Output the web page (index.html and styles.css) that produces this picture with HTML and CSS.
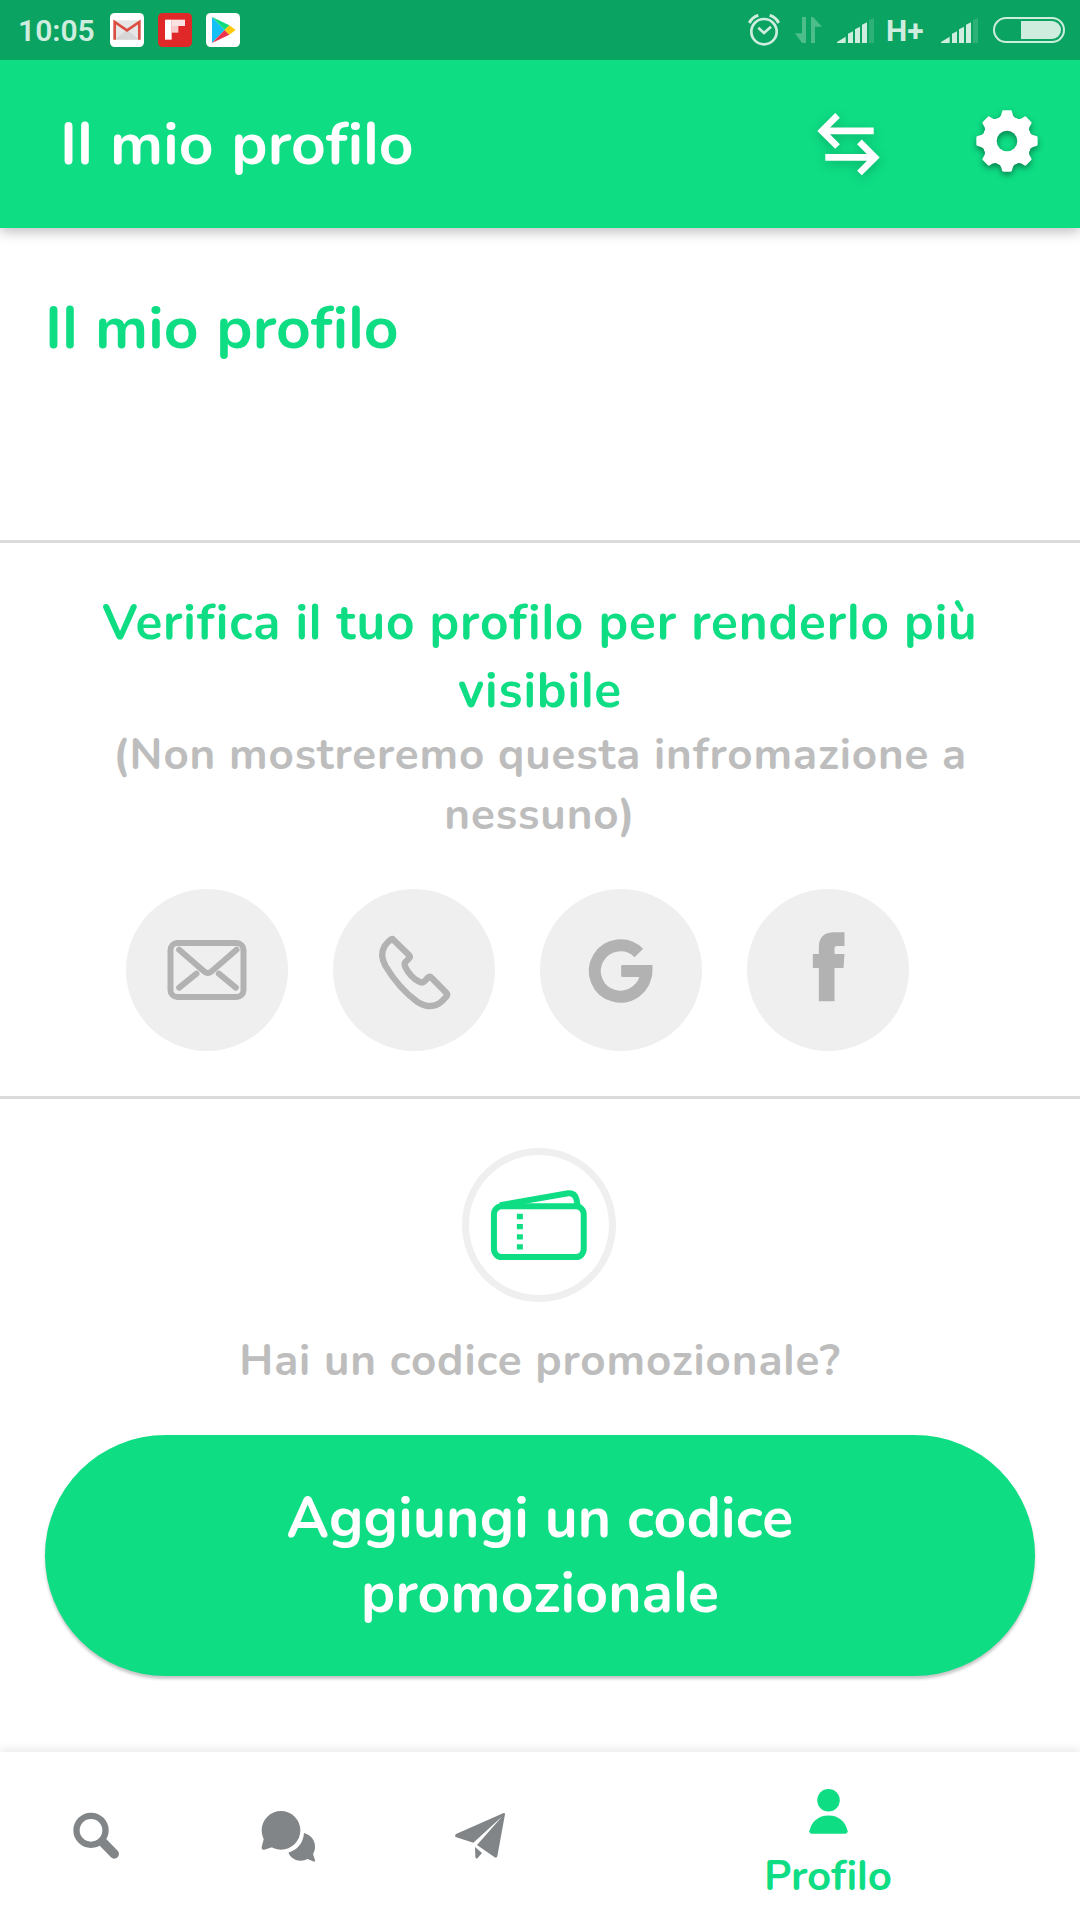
FILE: index.html
```html
<!DOCTYPE html>
<html lang="it">
<head>
  <meta charset="UTF-8">
  <meta name="viewport" content="width=device-width, initial-scale=1.0">
  <title>Il mio profilo</title>
  <link rel="stylesheet" href="styles.css">
</head>
<body>
  <div class="status-bar">
    <span class="clock">10:05</span>
    <svg class="app-icon" viewBox="0 0 102 102">
      <rect width="102" height="102" rx="14" fill="#fff"/>
      <path d="M14 22h74v58H14z" fill="#e6e6e6"/>
      <path d="M14 80l37-30 37 30z" fill="#d6d6d6"/>
      <path d="M14 80V27l37 25 37-25v53" fill="none" stroke="#dc4e41" stroke-width="8"/>
    </svg>
    <svg class="app-icon" viewBox="0 0 102 102">
      <rect width="102" height="102" rx="14" fill="#e12828"/>
      <path d="M21 20h20v60H21z" fill="#fff"/>
      <path d="M41 20h40v19H41z" fill="#fbe3e3"/>
      <path d="M41 39h20v20H41z" fill="#f7cccc"/>
    </svg>
    <svg class="app-icon" viewBox="0 0 102 102">
      <rect width="102" height="102" rx="14" fill="#fff"/>
      <path d="M18 12v78l38-39z" fill="#14c0f5"/>
      <path d="M18 12l38 39 14-14z" fill="#0bdc7c"/>
      <path d="M18 90l38-39 14 14z" fill="#f0334a"/>
      <path d="M70 37l19 14-19 14-14-14z" fill="#ffc80a"/>
    </svg>

    <div class="status-right">
      <svg class="alarm" viewBox="0 0 96 96">
        <g fill="none" stroke="#ceeddf">
          <circle cx="48" cy="53" r="38" stroke-width="8"/>
          <path d="M31 41l17 16 21-19" stroke-width="8"/>
          <path d="M4 27Q12 10 31 4M92 27Q84 10 65 4" stroke-width="9"/>
        </g>
      </svg>
      <svg class="data" viewBox="0 0 81 78" fill="#4dbd8b">
        <path d="M21 0h12v78H21L0 49h21z"/>
        <path d="M48 78h12V29h21L54 0h-6z"/>
      </svg>
      <svg class="signal" viewBox="0 0 111 75" fill="#ceeddf">
        <path d="M0 75v-3l26-16v19zM33 75V47l15-7v35zM54 75V34l15-8v49zM75 75V20l15-7v62z"/>
        <path d="M96 75V6l15-6v75z" fill="#2eb079"/>
      </svg>
      <span class="network">H+</span>
      <svg class="signal" viewBox="0 0 111 75" fill="#ceeddf">
        <path d="M0 75v-3l26-16v19zM33 75V47l15-7v35zM54 75V34l15-8v49zM75 75V20l15-7v62z"/>
        <path d="M96 75V6l15-6v75z" fill="#2eb079"/>
      </svg>
      <svg class="battery" viewBox="0 0 216 78">
        <rect x="3" y="3" width="210" height="72" rx="36" fill="none" stroke="#ceeddf" stroke-width="6"/>
        <path d="M84 12h93a27 27 0 0 1 0 54H84z" fill="#ceeddf"/>
      </svg>
    </div>
  </div>

  <header class="app-bar">
    <h1>Il mio profilo</h1>
    <svg class="swap" viewBox="0 0 190 188">
      <g fill="none" stroke="#fff" stroke-width="20">
        <path d="M62 6L15 53l47 47M18 53h153"/>
        <path d="M128 86l47 47-47 47M172 133H25"/>
      </g>
    </svg>
    <svg class="gear" viewBox="-93 -93 186 186">
      <mask id="hole">
        <rect x="-93" y="-93" width="186" height="186" fill="#fff"/>
        <circle r="31" fill="#000"/>
      </mask>
      <g fill="#fff" mask="url(#hole)">
        <circle r="70"/>
        <path id="tooth" d="M-15-88Q-15-92-10-92H10Q15-92 15-88L17-80Q20-69 30-68L0 0-30-68Q-20-69-17-80z"/>
        <use href="#tooth" transform="rotate(45)"/>
        <use href="#tooth" transform="rotate(90)"/>
        <use href="#tooth" transform="rotate(135)"/>
        <use href="#tooth" transform="rotate(180)"/>
        <use href="#tooth" transform="rotate(225)"/>
        <use href="#tooth" transform="rotate(270)"/>
        <use href="#tooth" transform="rotate(315)"/>
      </g>
    </svg>
  </header>

  <main>
    <section class="intro">
      <h2>Il mio profilo</h2>
    </section>

    <section class="verify">
      <h3>Verifica il tuo profilo per renderlo più<br>visibile</h3>
      <p class="note">(Non mostreremo questa infromazione a<br>nessuno)</p>
      <div class="channels">
        <svg class="channel" viewBox="51 57 483 486">
          <g fill="none" stroke="#b2b2b2" stroke-width="18" stroke-linecap="round">
            <rect x="183" y="219" width="219" height="162" rx="21"/>
            <path d="M209 239l76 66q10 8 20 0l76-66M209 353l52-42M328 311l51 42"/>
          </g>
        </svg>
        <svg class="channel" viewBox="669 57 483 486">
          <path d="M846 207L896 256Q900 261 896 265L885 276Q880 281 885 292Q900 322 926 335Q936 340 942 334L952 323Q958 318 963 323L1008 369Q1012 374 1008 379L994 394Q965 422 920 395Q865 355 825 288Q807 255 822 229Q830 217 842 208Z" fill="none" stroke="#b2b2b2" stroke-width="19" stroke-linejoin="round"/>
        </svg>
        <svg class="channel" viewBox="63 57 483 486">
          <path d="M358 249A77 77 0 1 0 380 303" fill="none" stroke="#b2b2b2" stroke-width="36"/>
          <path d="M399 285H309q-4 0-4 4v28q0 4 4 4h88q2-10 2-36z" fill="#b2b2b2"/>
        </svg>
        <svg class="channel" viewBox="681 57 483 486">
          <path d="M895 394V294H877V252H895V232Q895 187 942 187H972V228H950Q942 228 942 234V252H972L969 294H942V394Z" fill="#b2b2b2"/>
        </svg>
      </div>
    </section>

    <section class="promo">
      <div class="ticket">
        <svg viewBox="66 53 463 463">
          <g fill="none" stroke="#0edd84" stroke-width="18">
            <rect x="162" y="228" width="270" height="153" rx="24"/>
            <path d="M180 225L385 189Q405 187 410 207L414 226"/>
          </g>
          <path d="M240 251v110" stroke="#0edd84" stroke-width="18" stroke-dasharray="16 14.5"/>
        </svg>
      </div>
      <p class="question">Hai un codice promozionale?</p>
      <button class="add-code">Aggiungi un codice<br>promozionale</button>
    </section>
  </main>

  <nav class="tabs">
    <a class="tab">
      <svg class="tab-icon" viewBox="78 205 180 180" fill="none" stroke="#828587">
        <circle cx="153" cy="272" r="43.5" stroke-width="19"/>
        <path d="M190 309l33 34" stroke-width="28" stroke-linecap="round"/>
      </svg>
    </a>
    <a class="tab">
      <svg class="tab-icon" viewBox="654 205 180 180" fill="#828587">
        <circle cx="723" cy="272" r="58"/>
        <path d="M672 295L665 322Q664 332 673 330L705 320z"/>
        <path d="M792 280Q826 290 825 325Q824 335 819 344L825 361Q826 368 819 365L803 358Q792 364 779 363Q754 360 745 339Q788 325 792 280Z"/>
      </svg>
    </a>
    <a class="tab">
      <svg class="tab-icon" viewBox="1230 205 180 180" fill="#828587">
        <path d="M1391 220L1248 283Q1242 290 1249 293L1300 309L1387 230L1311 316L1364 353Q1370 356 1372 350L1395 224Q1395 219 1391 220Z"/>
        <path d="M1305 322L1326 340L1313 355Q1306 360 1306 350Z"/>
      </svg>
    </a>
    <a class="tab active">
      <svg class="person" viewBox="206 147 118 136" fill="#0edd84">
        <circle cx="265" cy="181" r="34"/>
        <path d="M207 275Q218 228 265 227Q312 228 323 275Q323 282 316 282H214Q207 282 207 275Z"/>
      </svg>
      <span>Profilo</span>
    </a>
  </nav>
</body>
</html>
```
FILE: styles.css
```css
* {
  box-sizing: border-box;
  margin: 0;
  padding: 0;
}
body {
  width: 1080px;
  height: 1920px;
  display: flex;
  flex-direction: column;
  background-color: #fff;
  font-family: Nunito, Lato, "Open Sans", sans-serif;
  font-weight: 700;
  font-feature-settings: "ss02";
  font-variant-ligatures: none;
  overflow: hidden;
}
svg {
  display: block;
}

/* status bar */
.status-bar {
  position: relative;
  z-index: 1;
  height: 60px;
  display: flex;
  align-items: center;
  gap: 14px;
  padding: 0 15px 0 18px;
  background-color: #0ba361;
  color: #ceeddf;
  font-family: Roboto, sans-serif;
}
.clock {
  width: 78px;
  font-size: 30px;
  font-weight: 600;
}
.app-icon {
  width: 34px;
  height: 34px;
}
.status-right {
  display: flex;
  align-items: center;
  margin-left: auto;
}
.alarm {
  width: 32px;
  height: 32px;
  margin-right: 15px;
}
.data {
  width: 27px;
  height: 26px;
  margin-right: 15px;
}
.signal {
  width: 37px;
  height: 25px;
}
.network {
  width: 67px;
  padding-left: 12px;
  font-size: 30px;
  font-weight: 700;
}
.battery {
  width: 72px;
  height: 26px;
  margin-left: 15px;
}

/* app bar */
.app-bar {
  position: relative;
  height: 168px;
  display: flex;
  align-items: center;
  padding: 0 42px 0 60px;
  background-color: #0edd84;
  box-shadow: 0 4px 12px rgba(0, 0, 0, 0.25);
  color: #fff;
}
h1, h2 {
  font-size: 60.5px;
  font-weight: 700;
  line-height: 72px;
  letter-spacing: 0.1px;
  word-spacing: 1px;
}
.swap {
  width: 63px;
  height: 63px;
  margin-left: auto;
  overflow: visible;
  filter: drop-shadow(0 3px 6px rgba(0, 0, 0, 0.2));
}
.gear {
  width: 62px;
  height: 62px;
  margin: 0 0 6px 96px;
  overflow: visible;
  filter: drop-shadow(0 3px 3px rgba(0, 0, 0, 0.4));
}

main {
  flex: 1;
}
.intro {
  height: 315px;
  padding: 64px 45px 0;
  border-bottom: 3px solid #dbdbdb;
  color: #0edd84;
}

/* verification */
.verify {
  height: 556px;
  padding-top: 46px;
  border-bottom: 3px solid #dbdbdb;
  text-align: center;
}
h3 {
  color: #0edd84;
  font-size: 49.5px;
  font-weight: 700;
  line-height: 68px;
  letter-spacing: 0.85px;
}
.note, .question {
  color: #bdbdbd;
  font-size: 44px;
  line-height: 60px;
  letter-spacing: 0.87px;
}
.channels {
  display: flex;
  gap: 45px;
  margin: 44px 0 0 126.4px;
}
.channel {
  width: 162px;
  height: 162px;
  border-radius: 50%;
  background-color: #efefef;
}

/* promo code */
.promo {
  display: flex;
  flex-direction: column;
  align-items: center;
  padding: 49px 45px 0;
}
.ticket {
  width: 154px;
  height: 154px;
  margin-right: 2px;
  border-radius: 50%;
  box-shadow: inset 0 0 0 7px #efefef;
}
.question {
  margin-top: 29px;
}
.add-code {
  width: 100%;
  height: 241px;
  margin-top: 44px;
  border: none;
  border-radius: 121px;
  background-color: #0edd84;
  box-shadow: 0 3px 3px rgba(0, 0, 0, 0.22);
  color: #fff;
  font-family: inherit;
  font-feature-settings: inherit;
  font-size: 57px;
  font-weight: 700;
  line-height: 75px;
  letter-spacing: 0.2px;
}

/* bottom tabs */
.tabs {
  height: 168px;
  display: flex;
  background-color: #fff;
  box-shadow: 0 -2px 10px rgba(0, 0, 0, 0.1);
}
.tab {
  width: 192px;
  display: flex;
  justify-content: center;
  align-items: center;
  padding-top: 4px;
}
.tab-icon {
  width: 60px;
  height: 60px;
}
.tab.active {
  flex: 1;
  flex-direction: column;
  justify-content: flex-start;
  padding-top: 37px;
  color: #0edd84;
  font-size: 42px;
  line-height: 50px;
}
.person {
  width: 39px;
  height: 45px;
  margin-bottom: 18px;
}
```
